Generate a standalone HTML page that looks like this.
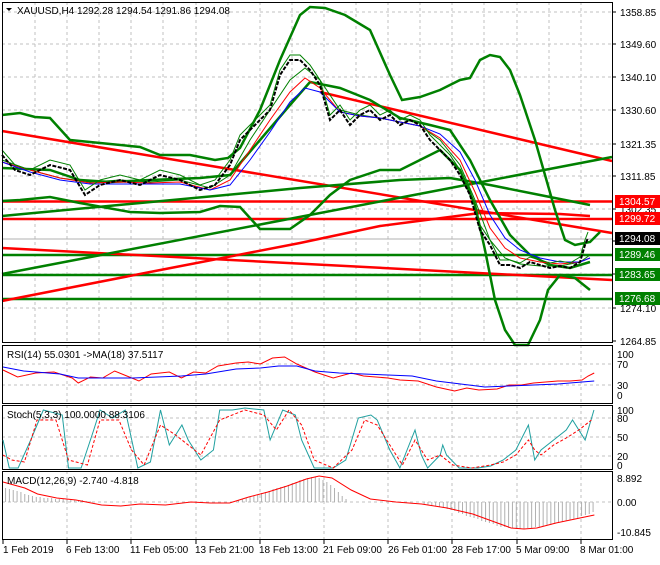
<!DOCTYPE html>
<html><head><meta charset="utf-8"><style>
html,body{margin:0;padding:0;background:#fff;}
body{width:660px;height:560px;overflow:hidden;font-family:"Liberation Sans",sans-serif;}
text{font-family:"Liberation Sans",sans-serif;font-size:10px;fill:#000;}
.n{vector-effect:non-scaling-stroke;}
</style></head><body>
<svg width="660" height="560" viewBox="0 0 660 560" xmlns="http://www.w3.org/2000/svg">
<rect width="660" height="560" fill="#fff"/>
<!-- grid -->
<g stroke="#c0c0c0" stroke-dasharray="3,3" stroke-width="1" fill="none">
<path d="M35 2V342M67 2V342M99 2V342M131 2V342M163 2V342M196 2V342M228 2V342M260 2V342M292 2V342M324 2V342M356 2V342M388 2V342M420 2V342M452 2V342M484 2V342M517 2V342M549 2V342M581 2V342"/>
<path d="M2 12H612M2 44H612M2 77H612M2 110H612M2 144H612M2 176H612M2 209H612M2 274H612M2 308H612"/>
<path d="M67 345V403M131 345V403M196 345V403M260 345V403M324 345V403M388 345V403M452 345V403M517 345V403M581 345V403M2 364H612M2 385H612"/>
<path d="M67 405V469M131 405V469M196 405V469M260 405V469M324 405V469M388 405V469M452 405V469M517 405V469M581 405V469M2 418H612M2 437H612M2 456H612"/>
<path d="M67 471V539M131 471V539M196 471V539M260 471V539M324 471V539M388 471V539M452 471V539M517 471V539M581 471V539M2 502H612"/>
</g>
<line x1="2" y1="239" x2="612" y2="239" stroke="#b0b0b0"/>
<!-- horizontal levels -->
<g stroke-width="2.5" fill="none">
<path d="M2 201.5H612M2 219H612" stroke="#ff0000"/>
<path d="M2 255H612M2 275H612M2 299H612" stroke="#008000"/>
<path d="M2 131L612 233M320 92L612 161M2 248L612 280" stroke="#ff0000"/>
<polyline stroke="#ff0000" points="2,301 150,272 300,243 380,226 480,213 560,214 590,216"/>
<path d="M2 274L612 157" stroke="#008000"/>
<polyline stroke="#008000" points="2,216 300,188 400,180 450,178 490,185 540,195 590,205"/>
<polyline stroke="#008000" points="2,115 20,113 35,117 50,118 70,140 90,142 140,147 160,155 190,155 215,160 228,158 240,148 260,110 280,60 300,15 310,7 325,8 345,15 370,30 390,75 402,100 420,97 440,90 460,80 470,78 480,60 490,55 500,57 510,70 520,95 535,140 545,175 555,210 565,240 575,245 590,242 600,232"/>
<polyline stroke="#008000" points="2,168 50,170 80,180 110,182 150,180 200,178 230,175 260,140 290,105 310,82 340,88 370,100 400,118 430,125 450,130 470,160 490,200 510,235 530,255 550,265 570,268 590,262"/>
<polyline stroke="#008000" points="2,201 20,200 50,197 80,203 130,212 160,213 200,212 220,206 240,207 260,229 290,229 310,215 330,195 350,180 380,170 400,170 420,160 440,150 460,170 475,205 485,250 495,300 505,330 515,345 528,345 540,320 548,290 560,275 575,278 590,290"/>
</g>
<!-- MAs -->
<g fill="none" stroke-width="1">
<polyline stroke="#008000" points="2,160 30,170 60,178 90,182 120,180 150,182 180,180 210,188 230,175 250,140 270,110 290,80 305,68 320,80 340,110 360,115 380,118 400,122 420,126 440,140 460,165 475,200 490,240 505,258 520,264 540,266 560,266 580,262 590,255"/>
<polyline stroke="#ff0000" points="2,162 30,170 60,178 90,183 120,182 150,183 180,182 210,190 230,180 250,150 270,120 290,92 305,78 320,88 340,112 360,116 380,118 400,122 420,126 440,138 460,160 475,192 490,228 505,248 520,258 540,262 560,264 580,262 590,258"/>
<polyline stroke="#0000ff" points="2,162 30,172 60,180 90,184 120,184 150,184 180,184 210,190 230,185 250,160 270,132 290,102 305,88 320,92 340,112 360,116 380,118 400,122 420,126 440,134 460,152 475,180 490,215 505,238 520,250 540,258 560,262 580,262 590,258"/>
</g>
<!-- price -->
<polyline fill="none" stroke="#000" stroke-width="2" stroke-dasharray="4,1.5" points="2,155 15,170 30,175 50,165 70,170 85,195 100,185 120,180 140,185 160,175 180,180 200,190 215,185 230,165 240,140 255,125 270,110 280,75 290,60 300,60 310,70 320,85 330,120 340,110 350,125 360,115 370,110 380,120 390,115 400,125 410,120 420,125 430,140 440,150 450,160 460,175 470,195 480,230 490,245 500,265 510,265 520,268 530,262 540,265 550,268 560,266 570,268 580,262 585,245 588,238"/>
<polyline fill="none" stroke="#008000" stroke-width="1" points="2,150 15,165 30,170 50,160 70,165 85,190 100,180 120,175 140,180 160,170 180,175 200,185 215,180 230,160 240,135 255,120 270,105 280,70 290,55 300,55 310,65 320,80 330,115 340,105 350,120 360,110 370,105 380,115 390,110 400,120 410,115 420,120 430,135 440,145 450,155 460,170 470,190 480,225 490,240 500,260 510,260 520,263 530,257 540,260 550,263 560,261 570,263 580,257 585,240 588,232"/>
<!-- panel borders -->
<g fill="none" stroke="#000" stroke-width="1">
<rect x="2.5" y="2.5" width="610" height="340"/>
<rect x="2.5" y="345.5" width="610" height="58"/>
<rect x="2.5" y="405.5" width="610" height="64"/>
<rect x="2.5" y="471.5" width="610" height="68"/>
</g>
<!-- RSI -->
<g transform="translate(3,0) scale(1.214,1) translate(-3,0)">
<polyline class="n" fill="none" stroke="#ff0000" points="3,370 15,377 30,373 45,372 60,378 65,383 75,377 85,378 95,371 105,376 115,381 125,374 140,372 150,378 160,372 170,373 180,366 195,363 205,362 215,364 225,358 235,357 245,364 260,372 275,378 290,373 300,376 320,378 330,380 345,381 360,387 375,391 385,388 395,390 410,389 420,385 430,385 440,383 450,382 460,381 470,381 480,380 485,376 490,373"/>
<polyline class="n" fill="none" stroke="#0000ff" points="3,367 20,371 50,374 65,378 90,378 110,378 130,377 150,376 170,374 195,369 215,368 230,366 245,366 260,371 280,373 300,374 320,375 340,376 360,381 380,384 400,387 420,386 440,385 460,384 480,382 490,381"/>
</g>
<text x="7" y="358">RSI(14) 55.0301  -&gt;MA(18) 37.5117</text>
<!-- Stoch -->
<g transform="translate(3,0) scale(1.26,1) translate(-3,0)">
<polyline class="n" fill="none" stroke="#20a0a0" points="3,440 8,468 15,468 25,440 35,410 50,415 55,468 65,468 75,430 80,410 90,418 100,410 110,468 120,462 128,410 135,445 145,425 150,440 160,460 170,450 175,410 185,410 195,408 210,410 215,440 225,410 235,415 240,440 250,468 265,468 275,460 285,418 295,415 300,420 310,450 318,468 330,430 335,455 340,468 350,455 352,445 355,455 365,468 380,468 390,466 400,460 405,455 410,450 420,425 425,460 430,450 440,440 450,430 455,420 465,440 472,410"/>
<polyline class="n" fill="none" stroke="#ff0000" stroke-dasharray="3,2" points="3,455 10,460 20,462 30,420 45,420 55,460 70,465 80,420 95,420 105,450 115,465 128,425 140,435 150,445 160,455 175,420 195,410 210,415 220,430 230,410 240,425 250,460 265,468 280,450 290,420 300,425 310,445 320,465 330,440 340,460 350,455 360,465 375,468 390,465 400,462 410,455 420,440 425,450 430,455 440,445 450,438 460,430 470,420"/>
</g>
<text x="7" y="418">Stoch(5,3,3) 100.0000 88.3106</text>
<!-- MACD -->
<g transform="translate(3,0) scale(1.28,1) translate(-3,0)">
<g stroke="#b0b0b0" stroke-width="1" fill="none" class="n">
<path class="n" d="M5 502V488M8 502V489M11 502V490M14 502V491M17 502V492M20 502V494M23 502V495M26 502V496M29 502V497M32 502V497M35 502V498M38 502V498M41 502V498M44 502V499M47 502V499M50 502V499M53 502V499M56 502V499M59 502V500M62 502V500M65 502V500M68 502V501M71 502V501M187 502V500M190 502V499M193 502V498M196 502V497M199 502V496M202 502V495M205 502V493M208 502V492M211 502V491M214 502V489M217 502V488M220 502V487M223 502V486M226 502V485M229 502V483M232 502V482M235 502V480M238 502V479M241 502V478M244 502V477M247 502V477M250 502V478M253 502V480M256 502V482M259 502V485M262 502V488M265 502V492M268 502V496M271 502V499M332 502V504M335 502V505M338 502V506M341 502V506M344 502V507M347 502V508M350 502V509M353 502V510M356 502V511M359 502V513M362 502V514M365 502V516M368 502V517M371 502V518M374 502V519M377 502V521M380 502V522M383 502V523M386 502V524M389 502V526M392 502V527M395 502V527M398 502V528M401 502V528M404 502V529M407 502V529M410 502V529M413 502V528M416 502V528M419 502V527M422 502V527M425 502V526M428 502V525M431 502V525M434 502V524M437 502V523M440 502V522M443 502V521M446 502V520M449 502V519M452 502V518M455 502V516M458 502V515M461 502V514M464 502V512"/>
</g>
<polyline class="n" fill="none" stroke="#ff0000" stroke-width="1" points="3,482 20,488 30,494 45,498 60,500 80,505 95,506 110,504 130,505 150,502 165,503 180,503 195,497 210,492 225,486 240,479 250,476 260,478 275,490 290,499 310,502 330,504 350,508 370,514 385,521 400,528 410,529 420,528 435,523 450,519 465,515"/>
</g>
<text x="7" y="484">MACD(12,26,9) -2.740 -4.818</text>
<!-- title -->
<path d="M6 8L12 8L9 11Z" fill="#000"/>
<text x="17" y="14">XAUUSD,H4  1292.28 1294.54 1291.86 1294.08</text>
<!-- right axis -->
<g stroke="#000"><path d="M612 12h4M612 44h4M612 77h4M612 110h4M612 144h4M612 176h4M612 209h4M612 241h4M612 274h4M612 308h4M612 341h4"/></g>
<g>
<text x="620" y="16">1358.85</text><text x="620" y="48">1349.60</text><text x="620" y="81">1340.10</text><text x="620" y="114">1330.60</text><text x="620" y="148">1321.35</text><text x="620" y="180">1311.85</text><text x="620" y="213">1302.35</text><text x="620" y="312">1274.10</text><text x="620" y="345">1264.85</text>
</g>
<rect x="615" y="195" width="45" height="13" fill="#ff0000"/><text x="619" y="205" style="fill:#fff">1304.57</text>
<rect x="615" y="212" width="45" height="13" fill="#ff0000"/><text x="619" y="222" style="fill:#fff">1299.72</text>
<rect x="615" y="232" width="45" height="13" fill="#000"/><text x="619" y="242" style="fill:#fff">1294.08</text>
<rect x="615" y="248" width="45" height="13" fill="#008000"/><text x="619" y="258" style="fill:#fff">1289.46</text>
<rect x="615" y="268" width="45" height="13" fill="#008000"/><text x="619" y="278" style="fill:#fff">1283.65</text>
<rect x="615" y="292" width="45" height="13" fill="#008000"/><text x="619" y="302" style="fill:#fff">1276.68</text>
<text x="617" y="358">100</text><text x="617" y="368">70</text><text x="617" y="389">30</text><text x="617" y="399">0</text>
<text x="617" y="414">100</text><text x="617" y="422">80</text><text x="617" y="441">50</text><text x="617" y="460">20</text><text x="617" y="469">0</text>
<text x="617" y="482">8.892</text><text x="617" y="506">0.00</text><text x="617" y="536">-10.845</text>
<!-- time axis -->
<g stroke="#000"><path d="M3 540v4M67 540v4M131 540v4M196 540v4M260 540v4M324 540v4M388 540v4M452 540v4M517 540v4M581 540v4"/></g>
<text x="3" y="553">1 Feb 2019</text><text x="66" y="553">6 Feb 13:00</text><text x="130" y="553">11 Feb 05:00</text><text x="195" y="553">13 Feb 21:00</text><text x="259" y="553">18 Feb 13:00</text><text x="323" y="553">21 Feb 09:00</text><text x="388" y="553">26 Feb 01:00</text><text x="452" y="553">28 Feb 17:00</text><text x="516" y="553">5 Mar 09:00</text><text x="580" y="553">8 Mar 01:00</text>
</svg>
</body></html>
